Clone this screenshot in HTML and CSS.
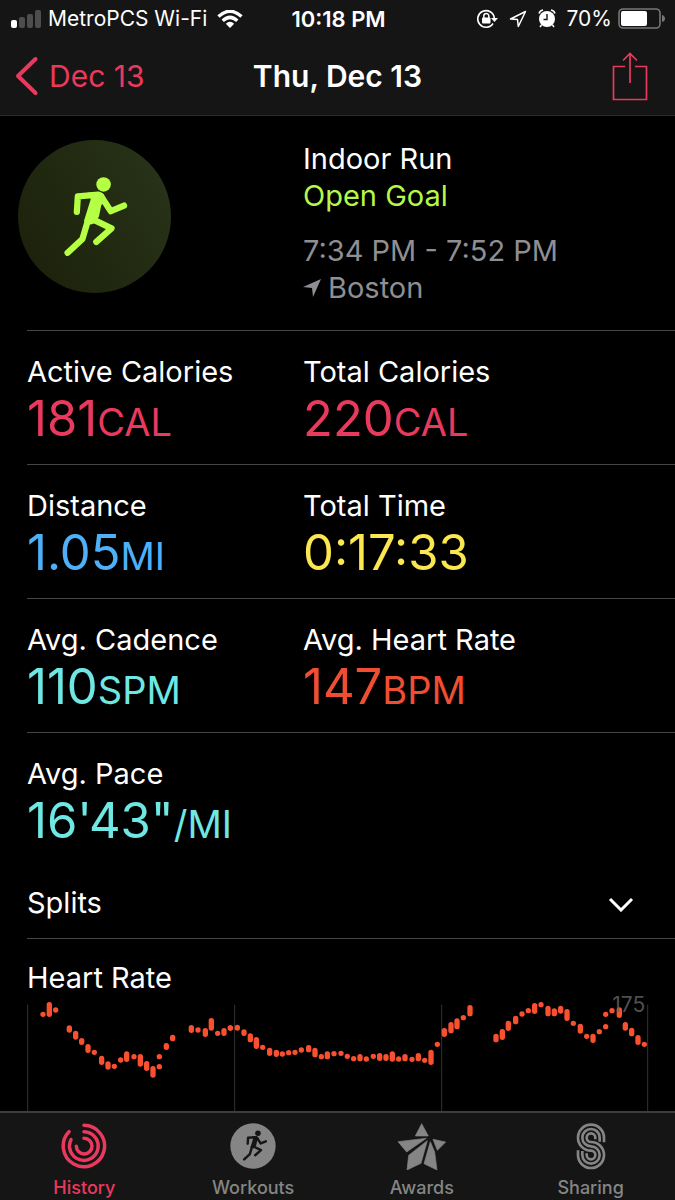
FILE: index.html
```html
<!DOCTYPE html>
<html lang="en">
<head>
    <meta charset="utf-8">
    <meta name="viewport" content="width=device-width, initial-scale=1">
    <title>Thu, Dec 13</title>
    <link rel="stylesheet" href="styles.css">
</head>
<body>
    <svg width="0" height="0" class="sprite" aria-hidden="true">
        <symbol id="runner" viewBox="190 145 200 250">
            <circle cx="316" cy="173" r="22" fill="currentColor"/>
            <path d="M268 198L300 196Q312 196 318 206L322 222L309 236L302 270L290 290L278 294L258 290L257 282L277 218Z" fill="currentColor"/>
            <path d="M235 256L238 209L300 204M308 208L338 254L378 237M282 278L340 306L294 347M268 284L252 338L207 380" fill="none" stroke="currentColor" stroke-width="19" stroke-linecap="round" stroke-linejoin="round"/>
        </symbol>
    </svg>

    <header class="top">
        <div class="status-bar">
            <div class="status-left">
                <svg width="31" height="18" viewBox="0 0 31 18">
                    <rect x="0" y="10" width="6" height="8" rx="2" fill="#fff"/>
                    <rect x="8" y="7" width="6" height="11" rx="2" fill="#4d4d4d"/>
                    <rect x="16" y="4" width="6" height="14" rx="2" fill="#4d4d4d"/>
                    <rect x="24" y="0" width="6" height="18" rx="2" fill="#4d4d4d"/>
                </svg>
                <span class="carrier">MetroPCS Wi-Fi</span>
                <svg width="26" height="18" viewBox="0 0 26 18" fill="none" stroke="#fff" stroke-width="3.4">
                    <path d="M1.5 6.6Q13-4 24.500 6.600"/>
                    <path d="M5.700 10.800Q13 4 20.300 10.800"/>
                    <path d="M13 18L8.800 13.700Q13 10 17.200 13.700Z" fill="#fff" stroke="none"/>
                </svg>
            </div>
            <time class="clock">10:18 PM</time>
            <div class="status-right">
                <svg width="21" height="20" viewBox="0 0 21 20">
                    <path d="M16 14.500A8.300 8.300 0 1 1 17.300 9" fill="none" stroke="#fff" stroke-width="1.600"/>
                    <path d="M14 9H21L17.500 13Z" fill="#fff"/>
                    <rect x="5" y="8.500" width="8.500" height="6" rx="1" fill="#fff"/>
                    <path d="M6.800 9V7a2.500 2.500 0 0 1 5 0V9" fill="none" stroke="#fff" stroke-width="1.500"/>
                </svg>
                <svg width="18" height="18" viewBox="0 0 18 18">
                    <path d="M1.500 9L16.500 1.500L9.300 16.500L8.500 9.500Z" fill="none" stroke="#fff" stroke-width="1.500" stroke-linejoin="round"/>
                </svg>
                <svg width="18" height="19" viewBox="0 0 18 19">
                    <circle cx="9" cy="10" r="8" fill="#fff"/>
                    <path d="M1 4.500A5 5 0 0 1 5 1M17 4.500A5 5 0 0 0 13 1M3.500 16L2 18M14.500 16L16 18" stroke="#fff" stroke-width="1.500" fill="none"/>
                    <path d="M9 5V10.500H5.500" stroke="#151515" stroke-width="1.400" fill="none"/>
                </svg>
                <span>70%</span>
                <svg class="battery" width="48" height="21" viewBox="0 0 48 21">
                    <rect x="1" y="1" width="41" height="19" rx="4" fill="none" stroke="#777" stroke-width="1.600"/>
                    <rect x="3" y="3" width="26" height="15" rx="2" fill="#fff"/>
                    <path d="M44 7Q47 8 47 10.500T44 14Z" fill="#777"/>
                </svg>
            </div>
        </div>
        <nav class="nav-bar">
            <a class="back" href="#">
                <svg width="24" height="40" viewBox="0 0 24 40"><path d="M20.500 3L3 20L20.500 37" fill="none" stroke="currentColor" stroke-width="4" stroke-linecap="round" stroke-linejoin="round"/></svg>
                Dec 13
            </a>
            <h1>Thu, Dec 13</h1>
            <button class="share" type="button" aria-label="Share">
                <svg width="36" height="49" viewBox="0 0 36 49" fill="none" stroke="currentColor" stroke-width="1.700">
                    <path d="M13 14.500H1.500V47.500H34.500V14.500H23M18 31V2M11 8.500L18 1.500L25 8.500"/>
                </svg>
            </button>
        </nav>
    </header>

    <main>
        <section class="hero">
            <div class="badge"><svg class="runner"><use href="#runner"/></svg></div>
            <div class="summary">
                <p>Indoor Run</p>
                <p class="goal">Open Goal</p>
                <p class="muted when">7:34 PM - 7:52 PM</p>
                <p class="muted">
                    <svg width="18" height="18" viewBox="0 0 18 18"><path d="M0 8L18 0L10 18L9 9Z" fill="currentColor"/></svg>
                    Boston
                </p>
            </div>
        </section>

        <dl class="stats">
            <div class="row">
                <div>
                    <dt>Active Calories</dt>
                    <dd class="pink">181<small>CAL</small></dd>
                </div>
                <div>
                    <dt>Total Calories</dt>
                    <dd class="pink">220<small>CAL</small></dd>
                </div>
            </div>
            <div class="row">
                <div>
                    <dt>Distance</dt>
                    <dd class="blue">1.05<small>MI</small></dd>
                </div>
                <div>
                    <dt>Total Time</dt>
                    <dd class="yellow">0:17:33</dd>
                </div>
            </div>
            <div class="row">
                <div>
                    <dt>Avg. Cadence</dt>
                    <dd class="teal">110<small>SPM</small></dd>
                </div>
                <div>
                    <dt>Avg. Heart Rate</dt>
                    <dd class="red">147<small>BPM</small></dd>
                </div>
            </div>
            <div class="row">
                <div>
                    <dt>Avg. Pace</dt>
                    <dd class="teal">16'43"<small>/MI</small></dd>
                </div>
            </div>
        </dl>

        <button class="splits" type="button" aria-expanded="false">
            Splits
            <svg width="26" height="18" viewBox="0 0 26 18"><path d="M2 5L13 16L24 5" fill="none" stroke="#fff" stroke-width="3"/></svg>
        </button>

        <section class="heart">
            <h2>Heart Rate</h2>
            <svg class="chart" viewBox="0 0 1944 336" role="img" aria-label="Heart rate">
                <path class="grid" d="M2 17V336M623 17V336M1244 17V336M1862 17V336"/>
                <g class="beats">
                    <path transform="translate(-21 -30)" d="M69 76v.1M88 47V76M107 63v.1M148 117V123M167 133V144M185 155V160M204 173V184M223 190v.1M245 208V220M264 225V234M283 232v.1M302 213v.1M320 195V211M342 203v.1M361 203V225M380 224V238M399 239V258M418 203v.1M418 233v.1M439 170V175M458 145V149M514 116V124M534 123v.1M556 125V136M574 95V117M593 133v.1M612 125V133M631 117v.1"/>
                    <path transform="translate(609 -30)" d="M1 117v.1M22 115V117M42 129V133M61 141V152M79 152V172M98 175v.1M119 184V193M139 190V196M157 195v.1M176 191v.1M195 190v.1M214 183v.1M236 176V182M255 184V197M274 203v.1M292 195V203M312 194v.1M333 193v.1M352 202v.1M371 209v.1M390 203V209M409 210v.1M430 202v.1M449 200V208M468 203V208M487 195V210M506 210v.1M525 203V209M546 211v.1M565 200V209M584 214v.1M603 190V220M622 166v.1"/>
                    <path transform="translate(1239 -30)" d="M13 125V136M33 107V125M51 96V113M70 86v.1M90 56V74M168 142V152M187 128V145M205 103V118M227 88V98M246 75v.1M265 65v.1M284 50V67M303 47v.1M324 58V74M343 66V74M362 58V66M381 68V88M400 103v.1M421 112V126M440 142v.1M459 142V154M478 128v.1M497 76v.1M497 113v.1M516 65v.1M538 63V79M556 107V117M575 124V134M594 146V160M613 166v.1"/>
                </g>
                <text x="1855" y="39" text-anchor="end">175</text>
            </svg>
        </section>
    </main>

    <nav class="tabs">
        <a class="active" href="#">
            <svg width="50" height="48" viewBox="179 50 150 144" fill="none" stroke="currentColor" stroke-width="10.500" stroke-linecap="round">
                <path d="M254 60A62 62 0 1 1 209 79"/>
                <path d="M254 79A43 43 0 1 1 215 103"/>
                <path d="M254 99A23.500 23.500 0 1 1 231 123"/>
            </svg>
            History
        </a>
        <a href="#">
            <svg width="50" height="48" viewBox="686 50 150 144">
                <circle cx="761" cy="122" r="68" fill="currentColor"/>
                <use href="#runner" x="728" y="72" width="76" height="97" color="#151515"/>
            </svg>
            Workouts
        </a>
        <a href="#">
            <svg width="50" height="48" viewBox="184 50 150 144" fill="currentColor" stroke="currentColor" stroke-width="2" stroke-linejoin="round">
                <path d="M258 55L278 92H239ZM187 109L272 99L213 140ZM275 106L219 150L214 194L256 174ZM292 102L330 110L305 135ZM284 109L297 140L304 194L265 175Z"/>
            </svg>
            Awards
        </a>
        <a href="#">
            <svg width="50" height="48" viewBox="691 50 150 144" fill="none" stroke="currentColor" stroke-width="8">
                <path d="M805 111V97A39 39 0 1 0 766 136A13 13 0 1 1 753 149V144"/>
                <path d="M792 109V97A26 26 0 1 0 766 123A26 26 0 1 1 740 149V137"/>
                <path d="M779 102V97A13 13 0 1 0 766 110A39 39 0 1 1 727 149V135"/>
            </svg>
            Sharing
        </a>
    </nav>
</body>
</html>
```

FILE: styles.css
```css
* {
    box-sizing: border-box;
}
body {
    display: flex;
    flex-direction: column;
    height: 100vh;
    margin: 0;
    background: #000;
    color: #fff;
    font-family: Inter, "Liberation Sans", sans-serif;
    font-size: 29px;
    line-height: 36px;
}
h1, h2, p, dl, dd {
    margin: 0;
    font-size: inherit;
    font-weight: 400;
}
a {
    color: inherit;
    text-decoration: none;
}
button {
    padding: 0;
    border: none;
    background: none;
    color: inherit;
    font: inherit;
    cursor: pointer;
}
svg {
    display: block;
}
.sprite {
    position: absolute;
}

/* status + navigation */
.top {
    background: #151515;
    border-bottom: 1px solid #2b2b2b;
}
.status-bar {
    display: grid;
    grid-template-columns: 1fr auto 1fr;
    align-items: center;
    height: 37px;
    padding: 0 9px 0 11px;
    font-size: 21px;
}
.status-left, .status-right {
    display: flex;
    align-items: center;
}
.status-left {
    gap: 6px;
}
.carrier {
    margin-right: 4px;
}
.clock {
    font-size: 22px;
    font-weight: 600;
}
.status-right {
    justify-content: flex-end;
    gap: 11px;
}
.battery {
    margin-left: -5px;
}
.nav-bar {
    display: grid;
    grid-template-columns: 1fr auto 1fr;
    align-items: center;
    height: 78px;
    padding: 0 15px;
    font-size: 30px;
}
.nav-bar h1 {
    font-weight: 600;
}
.back {
    display: flex;
    align-items: center;
    gap: 10px;
    color: #e93a5e;
}
.share {
    justify-self: end;
    padding: 0 12px;
    color: #e93a5e;
}

/* workout summary */
main {
    flex: 1;
    min-height: 0;
    padding-left: 27px;
    overflow-y: auto;
    scrollbar-width: none;
}
.hero, .row {
    display: grid;
    grid-template-columns: 23fr 31fr;
    border-bottom: 1px solid #454545;
}
.hero {
    padding: 24px 0;
}
.badge {
    display: grid;
    place-items: center;
    width: 153px;
    height: 153px;
    margin-left: -9px;
    border-radius: 50%;
    background: linear-gradient(60deg, #1b1f09, #29351a);
    color: #b5ff45;
}
.runner {
    width: 66px;
    height: 83px;
}
.summary p {
    display: flex;
    align-items: center;
    gap: 7px;
    line-height: 37px;
}
.summary .goal {
    color: #b5f84a;
}
.summary .muted {
    color: #8e8e93;
}
.summary .when {
    margin-top: 18px;
}

.row {
    padding: 23px 0 16px;
}
.row:last-child {
    border-bottom: none;
}
.row dd {
    font-size: 49px;
    line-height: 58px;
}
.row small {
    font-size: 38px;
    line-height: 1;
}
.pink { color: #e93a5e; }
.blue { color: #4fb0f8; }
.yellow { color: #fbe74f; }
.teal { color: #6fe7e3; }
.red { color: #f04e33; }

.splits {
    display: flex;
    align-items: center;
    justify-content: space-between;
    width: 100%;
    padding: 19px 41px 17px 0;
    border-bottom: 1px solid #454545;
}

.heart h2 {
    margin: 21px 0 3px;
}
.chart {
    width: 100%;
    overflow: visible;
}
.grid {
    stroke: #333;
    stroke-width: 3;
}
.beats {
    fill: none;
    stroke: #f9502f;
    stroke-width: 16;
    stroke-linecap: round;
}
.chart text {
    fill: #666;
    fill-opacity: 0.8;
    font-size: 63px;
}

/* bottom tabs */
.tabs {
    display: grid;
    grid-template-columns: repeat(4, 1fr);
    height: 89px;
    border-top: 2px solid #3c3c3c;
    background: #151515;
}
.tabs a {
    display: flex;
    flex-direction: column;
    align-items: center;
    gap: 6px;
    padding-top: 9px;
    color: #858585;
    font-size: 18px;
    font-weight: 500;
    line-height: 24px;
}
.tabs .active {
    color: #e93a5e;
}
```
